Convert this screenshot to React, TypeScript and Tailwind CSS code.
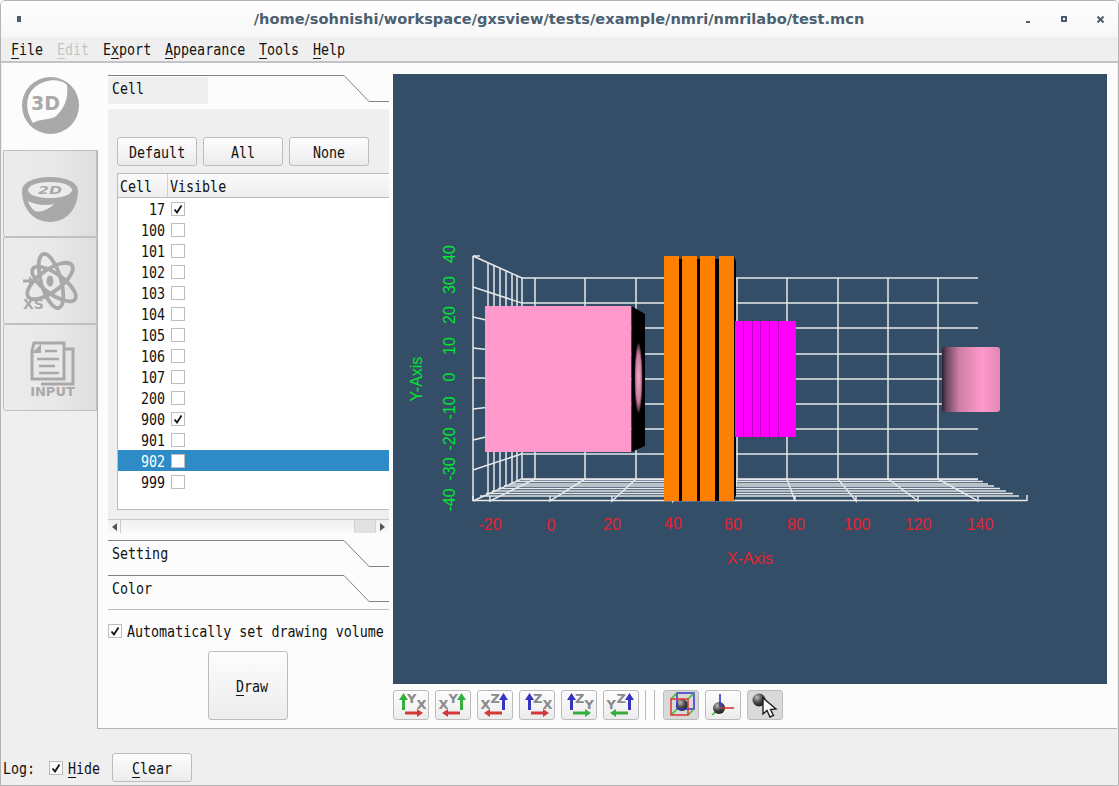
function T({ s, u, className = '' }: { s: string; u?: number; className?: string }) {
  return (
    <span className={`inline-block h-[20px] leading-[20px] whitespace-nowrap ${className}`} style={{ width: s.length * 8 }}>
      <span className="inline-block origin-left scale-x-[0.833] font-['DejaVu_Sans_Mono',monospace] text-[16px]">
        {u === undefined ? (
          s
        ) : (
          <>
            {s.slice(0, u)}
            <span className="underline underline-offset-[3px]">{s[u]}</span>
            {s.slice(u + 1)}
          </>
        )}
      </span>
    </span>
  );
}

function Check({ on, className = 'w-[14px] h-[14px] border-[#bdbdbd] bg-white' }: { on?: boolean; className?: string }) {
  return (
    <span className={`flex items-center justify-center border shrink-0 ${className}`}>
      {on && (
        <svg width="10" height="10" viewBox="0 0 10 10">
          <path d="M1.5 5.5 L4 8.5 L8.5 1.5" fill="none" stroke="#111" strokeWidth="1.8" />
        </svg>
      )}
    </span>
  );
}

function Btn({ s, u, className = '' }: { s: string; u?: number; className?: string }) {
  return (
    <button className={`flex items-center justify-center rounded-[3px] border border-[#bcbcbc] bg-gradient-to-b from-[#fdfdfd] to-[#ececec] text-[#111] ${className}`}>
      <T s={s} u={u} />
    </button>
  );
}

function SectionHead({ label, labelBg, h }: { label: string; labelBg?: boolean; h: number }) {
  return (
    <div className="relative shrink-0" style={{ height: h }}>
      <svg className="absolute inset-0" width="281" height={h}>
        <path d="M0 0.5 H236 L261 26.5 H281" fill="none" stroke="#808080" />
      </svg>
      <div className={`relative mt-[2px] w-[100px] h-[27px] flex items-center pl-[4px] pb-[6px] text-[#111] ${labelBg ? 'bg-[#efefef]' : ''}`}>
        <T s={label} />
      </div>
    </div>
  );
}

function Icon3D() {
  return (
    <svg width="75" height="75" viewBox="0 -1 75 75">
      <circle cx="37.5" cy="35.5" r="28.5" fill="#a9a9a9" />
      <path d="M20 53 C12 40 12 26 22 17 C32 9 47 8 54 15 C56 30 50 40 42 47 C34 50 26 49 20 53Z" fill="#fcfcfc" />
      <text x="18" y="40" fontFamily="DejaVu Sans" fontWeight="700" fontSize="19" fill="#a9a9a9">3D</text>
    </svg>
  );
}

function Icon2D() {
  return (
    <svg width="75" height="60" viewBox="0 0 75 60">
      <path d="M9 27 C9 18 22 13 37 13 C52 13 65 18 65 27 C65 44 54 58 37 58 C20 58 9 44 9 27Z" fill="#a9a9a9" />
      <ellipse cx="37" cy="26" rx="22" ry="8" fill="#ececec" />
      <text x="37" y="30" textAnchor="middle" fontFamily="DejaVu Sans" fontWeight="700" fontStyle="italic" fontSize="10" fill="#a9a9a9" textLength="24" lengthAdjust="spacingAndGlyphs">2D</text>
      <path d="M15 37 C23 41 32 42 41 40 C35 46 27 49 22 47 C19 45 16 41 15 37Z" fill="#ececec" />
    </svg>
  );
}

function IconXS() {
  return (
    <svg width="75" height="75" viewBox="-1 -3 75 75">
      <g fill="none" stroke="#a9a9a9" strokeWidth="3.8">
        <ellipse cx="36" cy="35" rx="27" ry="11" transform="rotate(-36 36 35)" />
        <ellipse cx="37" cy="35" rx="28" ry="10" transform="rotate(74 37 35)" />
        <ellipse cx="40" cy="38" rx="26" ry="10" transform="rotate(36 40 38)" />
      </g>
      <ellipse cx="36" cy="35" rx="3.5" ry="5.5" fill="#a9a9a9" />
      <path d="M9 33.5 H15 V30 L20 35 L15 40 V36.5 H9Z" fill="#a9a9a9" />
      <text x="9" y="63" fontFamily="DejaVu Sans" fontWeight="700" fontSize="14" fill="#a9a9a9">XS</text>
    </svg>
  );
}

function IconInput() {
  return (
    <svg width="75" height="75" viewBox="-2 -3 75 75">
      <path d="M37 16 H58 V51 H26" fill="none" stroke="#a9a9a9" strokeWidth="3" />
      <path d="M20 10 H50 V46 H18 V18Z" fill="#e9e9e9" stroke="#a9a9a9" strokeWidth="3" transform="translate(-1 0)" />
      <path d="M17 20 L26 11 V20Z" fill="#a9a9a9" />
      <g stroke="#a9a9a9" strokeWidth="2.6">
        <path d="M30 18 H42" />
        <path d="M22 26 H44" />
        <path d="M24 33 H40" />
        <path d="M24 40 H44" />
      </g>
      <text x="37.5" y="63" textAnchor="middle" fontFamily="DejaVu Sans" fontWeight="700" fontSize="13" fill="#a9a9a9">INPUT</text>
    </svg>
  );
}

function AxisIcon({ hi, lo, up, h, flip }: { hi: string; lo: string; up: string; h: string; flip?: boolean }) {
  const letter = { fontFamily: 'DejaVu Sans', fontWeight: 700, fontSize: 13, fill: '#8a8a8a' };
  return (
    <svg width="34" height="28" viewBox="0 0 34 28">
      {flip ? (
        <>
          <path d="M24 19 V9 H21 L25.5 2 L30 9 H27 V19Z" fill={up} />
          <path d="M24 20.5 H12 V18 L6 22 L12 26 V23.5 H24Z" fill={h} />
          <text x="2.5" y="18" {...letter}>{lo}</text>
          <text x="12.5" y="12" {...letter}>{hi}</text>
        </>
      ) : (
        <>
          <path d="M8 19 V9 H5 L9.5 2 L14 9 H11 V19Z" fill={up} />
          <path d="M11 20.5 H23 V18 L29 22 L23 26 V23.5 H11Z" fill={h} />
          <text x="13" y="12" {...letter}>{hi}</text>
          <text x="22.5" y="18" {...letter}>{lo}</text>
        </>
      )}
    </svg>
  );
}

const ball = (
  <radialGradient id="ball" cx="35%" cy="30%" r="70%">
    <stop offset="0" stopColor="#bbb" />
    <stop offset="0.6" stopColor="#444" />
    <stop offset="1" stopColor="#222" />
  </radialGradient>
);

function CubeIcon() {
  return (
    <svg width="34" height="28" viewBox="0 0 34 28">
      <defs>{ball}</defs>
      <circle cx="18" cy="14" r="6" fill="url(#ball)" />
      <g fill="none" strokeWidth="1.5">
        <path d="M13 2 H30 V18 H13Z" stroke="#33c" />
        <path d="M7 8 L13 2 M24 8 L30 2 M24 24 L30 18 M7 24 L13 18" stroke="#3b3" />
        <path d="M7 8 H24 V24 H7Z" stroke="#d33" />
      </g>
    </svg>
  );
}

function AxesIcon() {
  return (
    <svg width="34" height="28" viewBox="0 0 34 28">
      <defs>{ball}</defs>
      <path d="M14 17 L6 24" stroke="#3b3" strokeWidth="1.6" />
      <circle cx="13" cy="17" r="6" fill="url(#ball)" />
      <path d="M14 3 V16" stroke="#33c" strokeWidth="1.6" />
      <path d="M15 17 H28" stroke="#d33" strokeWidth="1.6" />
    </svg>
  );
}

function PickIcon() {
  return (
    <svg width="34" height="28" viewBox="0 0 34 28">
      <defs>{ball}</defs>
      <circle cx="11" cy="9" r="6.5" fill="url(#ball)" />
      <path d="M15 7 V23 L19 19.5 L22 26 L25.5 24.5 L22.5 18.5 L28 18Z" fill="#fff" stroke="#222" strokeWidth="1.4" />
    </svg>
  );
}

function ToolBtn({ children, on }: { children: React.ReactNode; on?: boolean }) {
  return (
    <button className={`w-[36px] h-[30px] flex items-center justify-center rounded-[3px] border border-[#bcbcbc] ${on ? 'bg-[#d9d9d9]' : 'bg-gradient-to-b from-[#fdfdfd] to-[#ececec]'}`}>
      {children}
    </button>
  );
}

const cells: [string, boolean][] = [
  ['17', true], ['100', false], ['101', false], ['102', false], ['103', false], ['104', false], ['105', false],
  ['106', false], ['107', false], ['200', false], ['900', true], ['901', false], ['902', false], ['999', false],
];

function Chart() {
  const lineColor = '#e6e8ea';
  const back = [535, 585, 636, 686, 737, 787, 838, 888, 938];
  const front = [490, 550, 612, 673, 733, 795, 856, 918, 978];
  const wallX = [473, 488, 494, 500, 506, 512, 517, 522];
  const floor: [number, number, number][] = [
    [479.5, 522, 978], [481.5, 516, 983], [484, 510, 988], [486, 504, 994], [488.5, 498, 1000],
    [491, 492, 1006], [493.5, 486, 1013], [496, 480, 1019], [500.5, 473, 1027],
  ];
  const yTicks: [string, number][] = [
    ['40', 254], ['30', 285], ['20', 315], ['10', 346], ['0', 377], ['-10', 408], ['-20', 439], ['-30', 469], ['-40', 500],
  ];
  const xTicks: [string, number, number][] = [
    ['-20', 490, 530], ['0', 551, 531], ['20', 612, 530], ['40', 673, 529], ['60', 733, 530],
    ['80', 796, 530], ['100', 857, 530], ['120', 918, 530], ['140', 980, 530],
  ];
  return (
    <svg className="block" width="714" height="610" viewBox="393 74 714 610">
      <defs>
        <linearGradient id="cyl" x1="0" x2="1" y1="0" y2="0">
          <stop offset="0" stopColor="#2a2030" />
          <stop offset="0.08" stopColor="#6b4660" />
          <stop offset="0.3" stopColor="#d07fa6" />
          <stop offset="0.7" stopColor="#ff99cc" />
          <stop offset="1" stopColor="#e088b4" />
        </linearGradient>
        <radialGradient id="lens">
          <stop offset="0" stopColor="#f6a6cc" />
          <stop offset="0.7" stopColor="#c67a9e" />
          <stop offset="1" stopColor="#2a1a24" />
        </radialGradient>
      </defs>
      <g stroke={lineColor} strokeWidth="1.5" fill="none">
        {[278, 303, 328, 354, 379, 404, 429, 454, 479].map((y) => (
          <path key={y} d={`M522 ${y} H978`} />
        ))}
        {back.map((x) => (
          <path key={x} d={`M${x} 278 V479`} />
        ))}
        {[256, 287, 317, 348, 378, 409, 440, 470, 501].map((y, i) => (
          <path key={y} d={`M473 ${y} L522 ${278 + i * 25.1}`} />
        ))}
        {wallX.map((x) => (
          <path key={x} d={`M${x} ${256 + ((x - 473) * 22) / 49} V${501 - ((x - 473) * 22) / 49}`} />
        ))}
        {floor.map(([y, a, b]) => (
          <path key={y} d={`M${a} ${y} H${b}`} />
        ))}
        {back.map((x, i) => (
          <path key={x} d={`M${x} 479 L${front[i]} 501 V496`} />
        ))}
        <path d="M473 256 H480 M1027 501 V495 M473 501 V496" />
      </g>
      <rect x="485" y="306" width="146.5" height="146" fill="#ff99cc" />
      <path d="M631.5 306 L645 314 V446 L631.5 452Z" fill="#000" />
      <ellipse cx="638.5" cy="378" rx="4" ry="35" fill="url(#lens)" />
      <rect x="679" y="259" width="4" height="242" fill="#000" />
      <rect x="697" y="259" width="4" height="242" fill="#000" />
      <rect x="715" y="259" width="4" height="242" fill="#000" />
      <path d="M734 256 L736 262 V495 L734 501Z" fill="#000" />
      {[664, 682, 700, 719].map((x) => (
        <rect key={x} x={x} y="256" width="15" height="245" fill="#ff8000" />
      ))}
      <rect x="735" y="321" width="61" height="116" fill="#ff00ff" />
      {[743.5, 752.5, 760.5, 769.5, 778.5].map((x) => (
        <path key={x} d={`M${x} 321 V437`} stroke="#c000c0" strokeWidth="1" />
      ))}
      <rect x="942" y="347" width="58" height="65" rx="3" fill="url(#cyl)" />
      <g fontFamily="Liberation Sans" fontSize="16" fill="#00e62e">
        {yTicks.map(([t, y]) => (
          <text key={t} x="455" y={y} textAnchor="middle" transform={`rotate(-90 455 ${y})`}>{t}</text>
        ))}
        <text x="422" y="379" textAnchor="middle" transform="rotate(-90 422 379)">Y-Axis</text>
      </g>
      <g fontFamily="Liberation Sans" fontSize="16" fill="#e8202e">
        {xTicks.map(([t, x, y]) => (
          <text key={t} x={x} y={y} textAnchor="middle">{t}</text>
        ))}
        <text x="750" y="564" textAnchor="middle">X-Axis</text>
      </g>
    </svg>
  );
}

export default function App() {
  return (
    <div className="w-[1119px] h-[786px] flex flex-col overflow-hidden rounded-t-[5px] border border-[#b4b4b4] bg-[#efefef] text-[#111]">
      {/* Title bar */}
      <div className="h-[36px] shrink-0 relative flex items-center justify-center bg-gradient-to-b from-white to-[#f7f7f7]">
        <span className="absolute left-[16px] top-[15px] w-[4px] h-[6px] bg-[#4c5f70]" />
        <span className="font-['DejaVu_Sans',sans-serif] font-bold text-[14.6px] text-[#4c5f70] ml-[-1px]">
          /home/sohnishi/workspace/gxsview/tests/example/nmri/nmrilabo/test.mcn
        </span>
        <span className="absolute left-[1025px] top-[20px] w-[4px] h-[2px] bg-[#4c5f70]" />
        <span className="absolute left-[1060px] top-[15px] w-[6px] h-[6px] border-2 border-[#4c5f70]" />
        <svg className="absolute left-[1096px] top-[15px]" width="7" height="7" viewBox="0 0 7 7">
          <path d="M0.5 0.5 L6.5 6.5 M6.5 0.5 L0.5 6.5" stroke="#4c5f70" strokeWidth="2" />
        </svg>
      </div>
      {/* Menu */}
      <div className="h-[26px] shrink-0 flex items-center gap-[14px] pl-[10px] border-b-2 border-[#c4c4c4]">
        <T s="File" u={0} />
        <T s="Edit" u={0} className="text-[#c4c4c4]" />
        <T s="Export" u={1} />
        <T s="Appearance" u={0} />
        <T s="Tools" u={0} />
        <T s="Help" u={0} />
      </div>
      <div className="flex-1 flex min-h-0">
        {/* Side tabs */}
        <div className="w-[96px] shrink-0 flex flex-col">
          <div className="h-[87px] ml-[1px] bg-[#fcfcfc] flex items-center justify-center z-10 mr-[-1px]">
            <Icon3D />
          </div>
          {[<Icon2D key="a" />, <IconXS key="b" />, <IconInput key="c" />].map((icon, i) => (
            <div key={i} className="h-[87px] ml-[2px] flex items-center justify-center overflow-hidden rounded-bl-[3px] border border-[#c0c0c0] bg-gradient-to-r from-[#ececec] via-[#e9e9e9] to-[#dedede]">
              {icon}
            </div>
          ))}
        </div>
        {/* Main panel */}
        <div className="w-[1020px] h-[666px] flex gap-[4px] border-l border-b border-[#b4b4b4] bg-[#fcfcfc] pl-[10px] pt-[11px]">
          <div className="w-[281px] shrink-0 flex flex-col mt-[1px]">
            <SectionHead label="Cell" labelBg h={34} />
            <div className="h-[410px] shrink-0 bg-[#efefef] pl-[9px] pt-[28px]">
              <div className="flex gap-[6px]">
                <Btn s="Default" className="w-[80px] h-[29px]" />
                <Btn s="All" className="w-[80px] h-[29px]" />
                <Btn s="None" className="w-[80px] h-[29px]" />
              </div>
              <div className="mt-[7px] h-[337px] border-l border-t border-b border-[#bcbcbc] bg-white">
                <div className="h-[24px] flex items-center border-b border-[#bcbcbc] bg-gradient-to-b from-[#fafafa] to-[#eeeeee]">
                  <div className="w-[50px] pl-[2px] border-r border-[#d0d0d0] h-full flex items-center">
                    <T s="Cell" />
                  </div>
                  <div className="pl-[2px]">
                    <T s="Visible" />
                  </div>
                </div>
                {cells.map(([c, on]) => {
                  const sel = c === '902';
                  return (
                    <div key={c} className={`h-[21px] flex items-center ${sel ? 'bg-[#2e8bc6] text-white' : ''}`}>
                      <div className="w-[47px] text-right">
                        <T s={c} />
                      </div>
                      <div className="ml-[6px]">
                        <Check on={on} />
                      </div>
                    </div>
                  );
                })}
              </div>
            </div>
            <div className="h-[14px] shrink-0 flex items-stretch bg-gradient-to-b from-[#f0f0f0] to-[#fafafa] border-t border-[#c8c8c8]">
              <div className="w-[13px] flex items-center justify-center border-r border-[#c8c8c8]">
                <svg width="5" height="8" viewBox="0 0 5 8"><path d="M5 0 V8 L0 4Z" fill="#555" /></svg>
              </div>
              <div className="flex-1" />
              <div className="w-[22px] bg-[#e2e2e2] border-x border-[#d2d2d2]" />
              <div className="w-[13px] flex items-center justify-center">
                <svg width="5" height="8" viewBox="0 0 5 8"><path d="M0 0 V8 L5 4Z" fill="#555" /></svg>
              </div>
            </div>
            <div className="h-[7px] shrink-0" />
            <SectionHead label="Setting" h={35} />
            <SectionHead label="Color" h={34} />
            <div className="border-t border-[#bcbcbc] h-[112px] shrink-0 flex flex-col">
              <div className="mt-[11px] flex items-center gap-[5px]">
                <Check on />
                <T s="Automatically set drawing volume" />
              </div>
              <Btn s="Draw" u={0} className="w-[80px] h-[69px] ml-[100px] mt-[10px] pl-[8px]" />
            </div>
          </div>
          <div className="w-[714px] shrink-0 flex flex-col">
            <div className="h-[610px] shrink-0 bg-[#354e67]">
              <Chart />
            </div>
            <div className="mt-[6px] flex gap-[6px]">
              <ToolBtn><AxisIcon hi="Y" lo="X" up="#35b040" h="#d23a3a" /></ToolBtn>
              <ToolBtn><AxisIcon hi="Y" lo="X" up="#35b040" h="#d23a3a" flip /></ToolBtn>
              <ToolBtn><AxisIcon hi="Z" lo="X" up="#3535c0" h="#d23a3a" flip /></ToolBtn>
              <ToolBtn><AxisIcon hi="Z" lo="X" up="#3535c0" h="#d23a3a" /></ToolBtn>
              <ToolBtn><AxisIcon hi="Z" lo="Y" up="#3535c0" h="#35b040" /></ToolBtn>
              <ToolBtn><AxisIcon hi="Z" lo="Y" up="#3535c0" h="#35b040" flip /></ToolBtn>
              <div className="w-[12px] h-[30px] flex gap-[8px]">
                <span className="w-px h-full bg-[#b8b8b8]" />
                <span className="w-px h-full bg-[#b8b8b8]" />
              </div>
              <ToolBtn on><CubeIcon /></ToolBtn>
              <ToolBtn><AxesIcon /></ToolBtn>
              <ToolBtn on><PickIcon /></ToolBtn>
            </div>
          </div>
        </div>
      </div>
      {/* Log bar */}
      <div className="h-[56px] shrink-0 flex items-end pb-[3px] pl-[2px]">
        <div className="h-[29px] flex items-center">
          <T s="Log:" />
          <Check on className="ml-[14px] w-[14px] h-[14px] border-[#bdbdbd] bg-[#fafafa]" />
          <T s="Hide" u={0} className="ml-[5px]" />
          <Btn s="Clear" u={0} className="ml-[12px] w-[80px] h-[29px]" />
        </div>
      </div>
    </div>
  );
}
